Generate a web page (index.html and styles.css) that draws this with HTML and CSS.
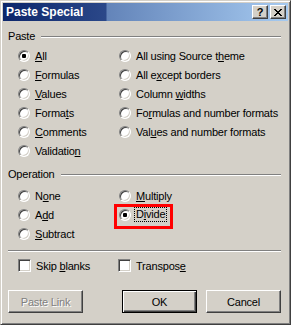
FILE: index.html
```html
<html>
  <head>
    <meta name="viewport" content="width=device-width,initial-scale=1">
    <link rel="stylesheet" href="styles.css">
  </head>

  <body>
    <div class="window">
      <div class="titlebar">
        <span class="title">Paste Special</span>
        <div class="title_buttons">
          <span class="tbtn help">?</span>
          <span class="tbtn close">
            <svg width="8" height="7" viewBox="0 0 8 7" shape-rendering="crispEdges">
              <path d="M0 0h2v1h-2zM6 0h2v1h-2zM1 1h2v1h-2zM5 1h2v1h-2zM2 2h4v1h-4zM3 3h2v1h-2zM2 4h4v1h-4zM1 5h2v1h-2zM5 5h2v1h-2zM0 6h2v1h-2zM6 6h2v1h-2z" fill="#000"/>
            </svg>
          </span>
        </div>
      </div>

      <div class="content">
        <!-- Paste group -->
        <div class="group_head"><span>Paste</span><i class="rule"></i></div>
        <div class="options paste_opts">
          <div class="opt"><span class="radio checked"></span><span><u>A</u>ll</span></div>
          <div class="opt"><span class="radio"></span><span><u>F</u>ormulas</span></div>
          <div class="opt"><span class="radio"></span><span><u>V</u>alues</span></div>
          <div class="opt"><span class="radio"></span><span>Forma<u>t</u>s</span></div>
          <div class="opt"><span class="radio"></span><span><u>C</u>omments</span></div>
          <div class="opt"><span class="radio"></span><span>Validatio<u>n</u></span></div>
          <div class="opt"><span class="radio"></span><span>All using Source t<u>h</u>eme</span></div>
          <div class="opt"><span class="radio"></span><span>All e<u>x</u>cept borders</span></div>
          <div class="opt"><span class="radio"></span><span>Column <u>w</u>idths</span></div>
          <div class="opt"><span class="radio"></span><span>Fo<u>r</u>mulas and number formats</span></div>
          <div class="opt"><span class="radio"></span><span>Val<u>u</u>es and number formats</span></div>
        </div>

        <!-- Operation group -->
        <div class="group_head op_head"><span>Operation</span><i class="rule"></i></div>
        <div class="options op_opts">
          <div class="opt"><span class="radio"></span><span>N<u>o</u>ne</span></div>
          <div class="opt"><span class="radio"></span><span>A<u>d</u>d</span></div>
          <div class="opt"><span class="radio"></span><span><u>S</u>ubtract</span></div>
          <div class="opt"><span class="radio"></span><span><u>M</u>ultiply</span></div>
          <div class="opt marked"><span class="radio checked"></span><span class="focus">D<u>i</u>vide</span></div>
        </div>

        <i class="rule separator"></i>

        <div class="checks">
          <div class="opt"><span class="check"></span><span>Skip <u>b</u>lanks</span></div>
          <div class="opt"><span class="check"></span><span>Transpos<u>e</u></span></div>
        </div>

        <div class="buttons">
          <span class="btn disabled">Paste Link</span>
          <span class="btn default">OK</span>
          <span class="btn">Cancel</span>
        </div>
      </div>
    </div>
  </body>
</html>
```

FILE: styles.css
```css
body {
    margin: 0;
    font-family: 'Liberation Sans', Arial, sans-serif;
    font-size: 11px;
    color: #000;
    background: #d4d0c8;
}
u {
    text-decoration: underline;
    text-underline-offset: 1px;
}

/* window frame */
.window {
    width: 291px;
    height: 325px;
    box-sizing: border-box;
    padding: 2px;
    background: #d4d0c8;
    border: 1px solid;
    border-color: #d4d0c8 #404040 #404040 #d4d0c8;
    box-shadow: inset 1px 1px #fff, inset -1px -1px #808080;
}
.titlebar {
    height: 18px;
    display: flex;
    align-items: center;
    justify-content: space-between;
    padding: 0 2px 0 3px;
    background: linear-gradient(90deg, #0c266b 0, #2b4889 103px, #6384b9 104px, #a6caf0 100%);
}
.title {
    color: #fff;
    font-weight: bold;
    font-size: 12px;
}
.title_buttons {
    display: flex;
    gap: 2px;
}
.tbtn {
    width: 16px;
    height: 14px;
    box-sizing: border-box;
    display: flex;
    align-items: center;
    justify-content: center;
    background: #d4d0c8;
    border: 1px solid;
    border-color: #fff #404040 #404040 #fff;
    box-shadow: inset -1px -1px #808080;
}
.help {
    font-weight: bold;
    font-size: 11px;
    line-height: 12px;
}

/* dialog body */
.content {
    padding: 0 7px 0 5px;
    letter-spacing: -0.2px;
}
.group_head {
    display: flex;
    align-items: center;
    gap: 6px;
    height: 13px;
    line-height: 13px;
    margin-top: 9px;
}
.op_head {
    margin-top: 8px;
}
.rule {
    display: block;
    flex: 1;
    height: 0;
    border-top: 1px solid #808080;
    border-bottom: 1px solid #fff;
}
.options {
    display: grid;
    grid-auto-flow: column;
    grid-template-columns: 101px auto;
    padding-left: 10px;
}
.paste_opts {
    grid-template-rows: repeat(6, 19px);
    margin-top: 3px;
}
.op_opts {
    grid-template-rows: repeat(3, 19px);
    margin-top: 5px;
}
.opt {
    display: flex;
    align-items: center;
    gap: 5px;
    white-space: nowrap;
}

/* classic radio */
.radio {
    width: 12px;
    height: 12px;
    box-sizing: border-box;
    border-radius: 50%;
    border: 1px solid;
    border-color: #808080 #fff #fff #808080;
    background: #fff;
    box-shadow: inset 1px 1px #404040, inset -1px -1px #d4d0c8;
    display: flex;
    align-items: center;
    justify-content: center;
    flex: none;
}
.radio.checked::after {
    content: "";
    width: 4px;
    height: 4px;
    border-radius: 1px;
    background: #000;
}

/* red highlight around Divide */
.marked {
    position: relative;
}
.marked::before {
    content: "";
    position: absolute;
    left: -5px;
    top: -1px;
    width: 59px;
    height: 25px;
    box-sizing: border-box;
    border: 3px solid #f00;
}
.focus {
    outline: 1px dotted #000;
    outline-offset: 0;
    padding: 0 1px;
    margin-left: -1px;
    line-height: 13px;
}

.separator {
    margin-top: 7px;
}

.checks {
    display: grid;
    grid-template-columns: 100px auto;
    height: 19px;
    padding-left: 10px;
    margin-top: 4px;
}
.check {
    width: 13px;
    height: 13px;
    box-sizing: border-box;
    border: 1px solid;
    border-color: #808080 #fff #fff #808080;
    background: #fff;
    box-shadow: inset 1px 1px #404040, inset -1px -1px #d4d0c8;
    flex: none;
}

/* push buttons */
.buttons {
    display: flex;
    gap: 9px;
    margin-top: 15px;
}
.btn {
    width: 75px;
    height: 23px;
    box-sizing: border-box;
    display: flex;
    align-items: center;
    justify-content: center;
    border: 1px solid;
    border-color: #fff #404040 #404040 #fff;
    box-shadow: inset -1px -1px #808080;
}
.btn.disabled {
    color: #808080;
    text-shadow: 1px 1px #fff;
    margin-right: 30px;
}
.btn.default {
    border-color: #000;
    box-shadow: inset 1px 1px #fff, inset -1px -1px #404040, inset -2px -2px #808080;
}
```
